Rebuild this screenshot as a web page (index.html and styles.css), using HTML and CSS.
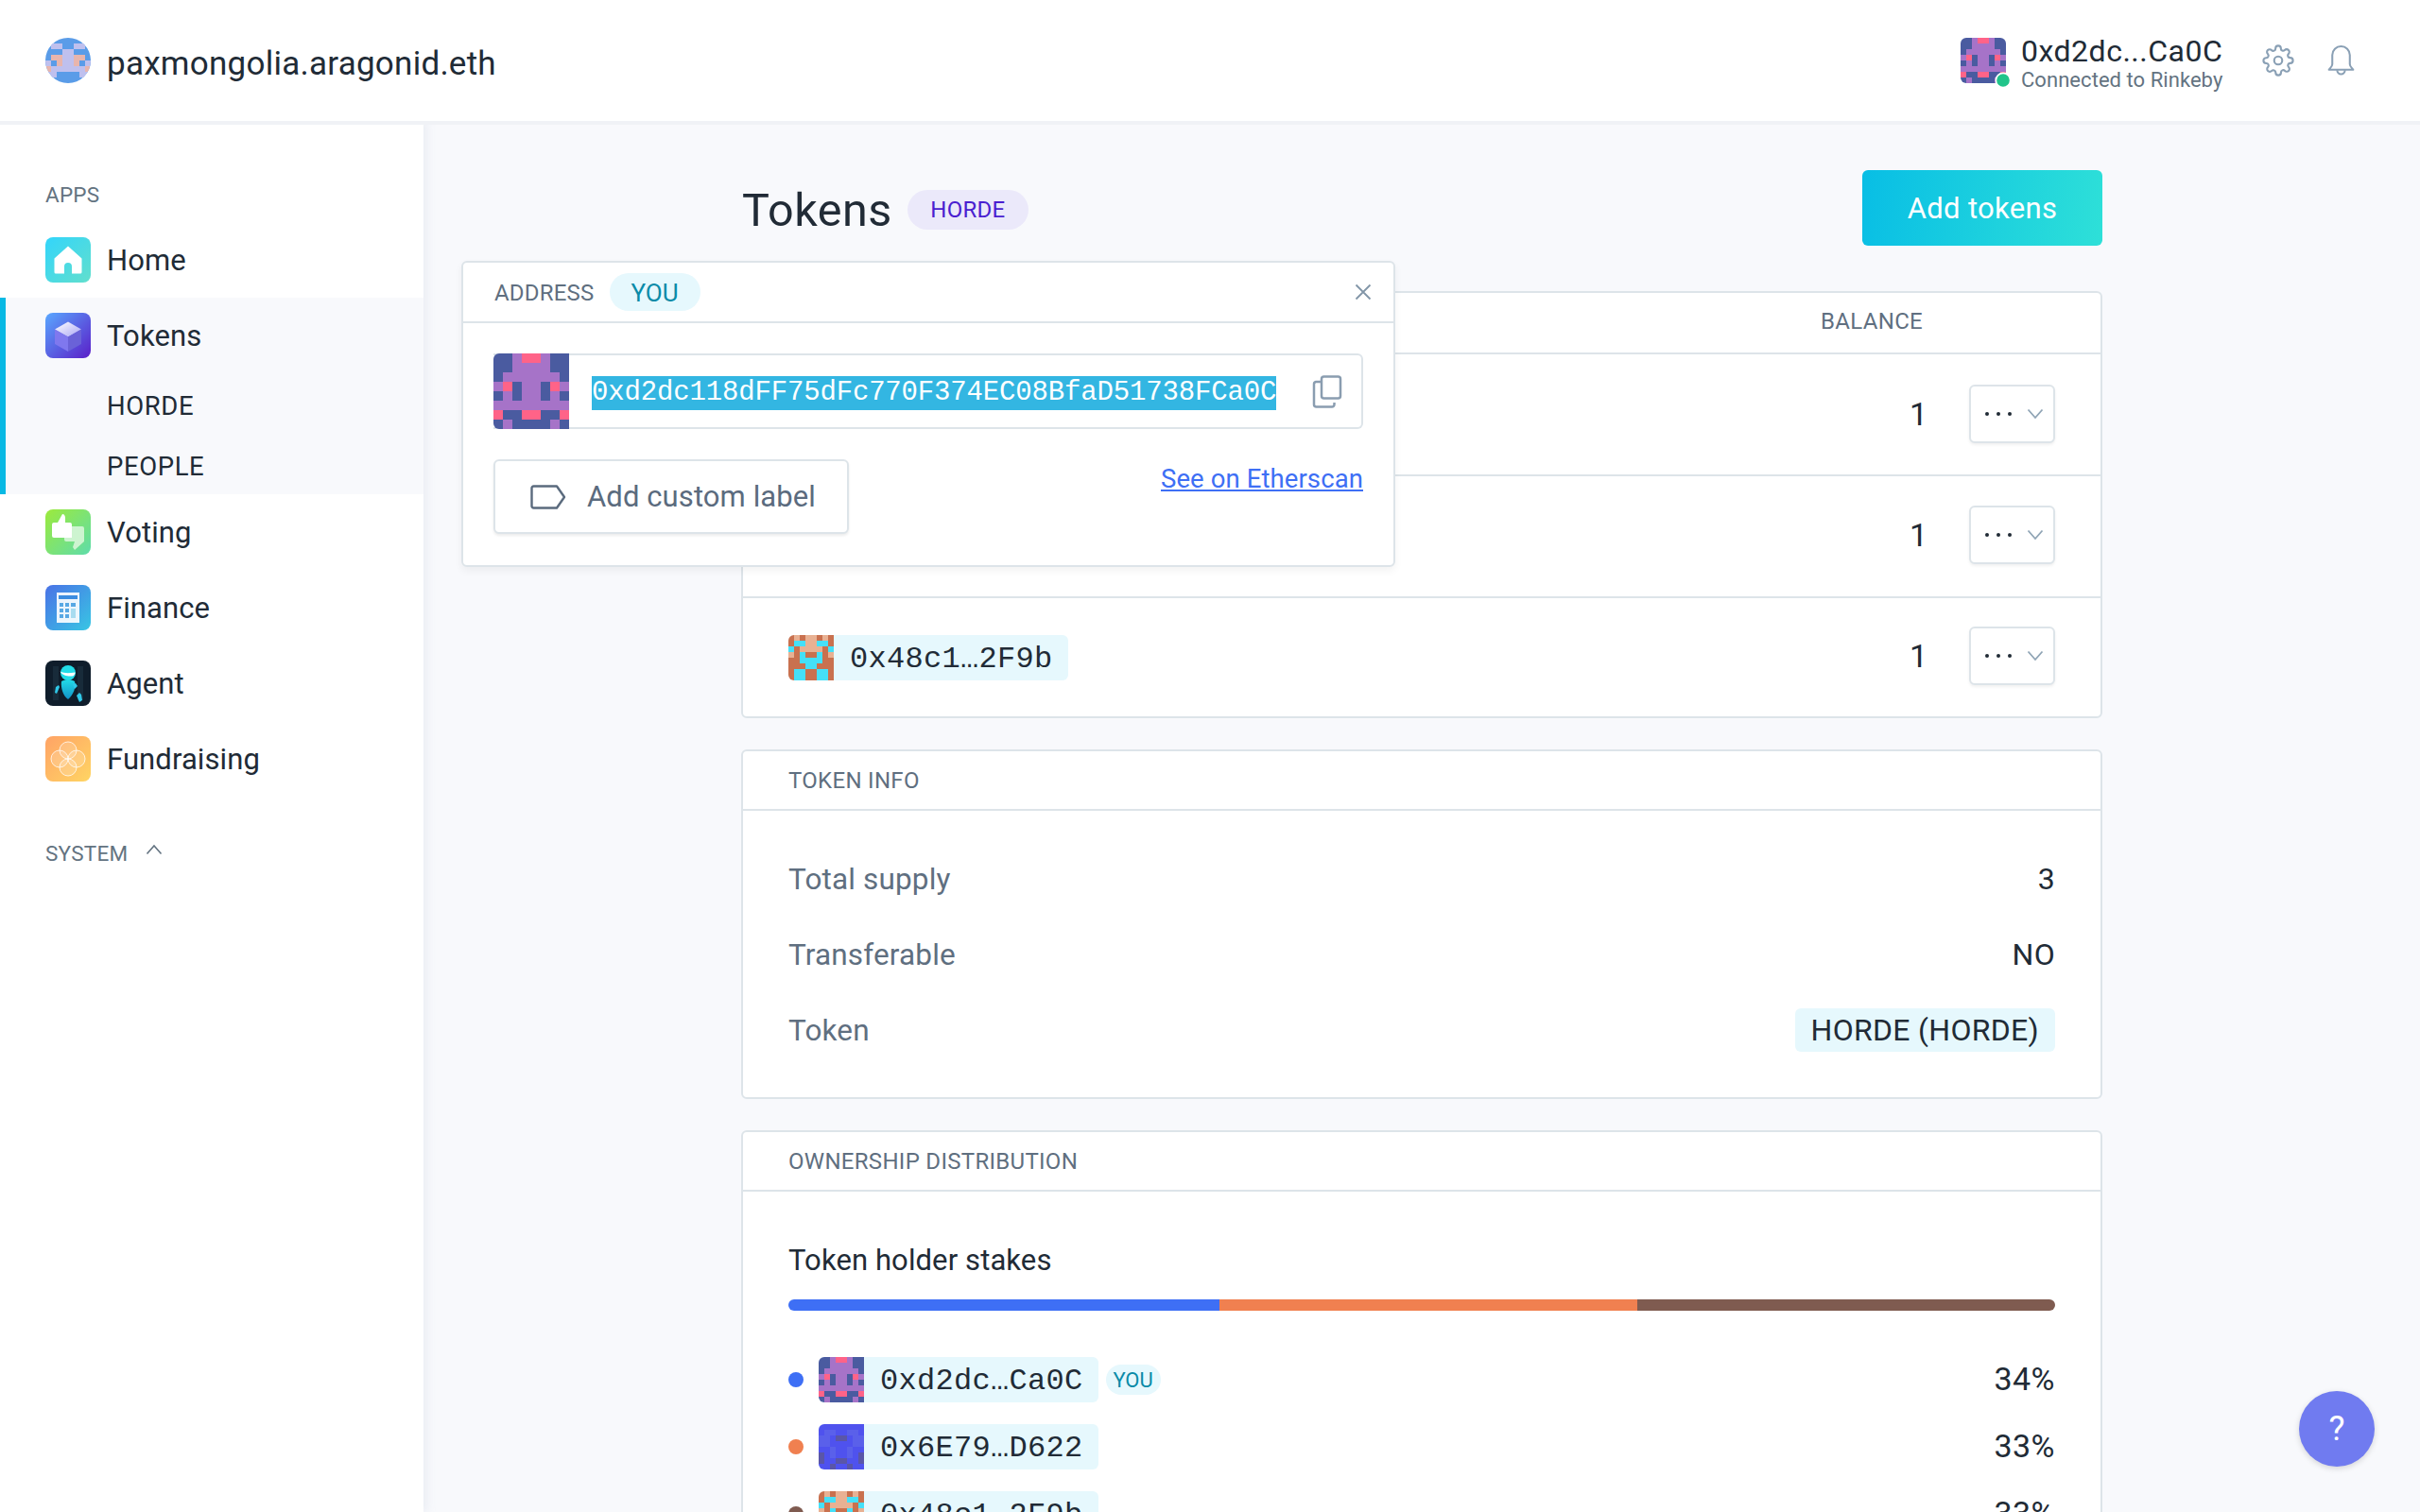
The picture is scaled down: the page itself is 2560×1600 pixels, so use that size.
FILE: index.html
```html
<!DOCTYPE html>
<html lang="en">
<head>
<meta charset="utf-8">
<title>Tokens</title>
<link rel="stylesheet" href="styles.css">
</head>
<body>
<svg class="defs" width="0" height="0" aria-hidden="true">
  <defs>
    <symbol id="av-you" viewBox="0 0 8 8" shape-rendering="crispEdges">
      <rect width="8" height="8" fill="#4a5ba0"/>
      <path fill="#a673c8" d="M2 0h1v1H2zM5 0h1v1H5zM2 1h4v1H2zM1 2h6v1H1zM0 3h1v1H0zM3 3h2v2H3zM7 3h1v1H7zM1 4h1v1H1zM6 4h1v1H6zM0 5h8v1H0zM1 7h1v1H1zM6 7h1v1H6z"/>
      <path fill="#ff6388" d="M3 0h2v1H3zM1 3h1v1H1zM6 3h1v1H6zM0 6h1v1H0zM3 6h2v1H3zM7 6h1v1H7z"/>
    </symbol>
    <symbol id="av-blue" viewBox="0 0 8 8" shape-rendering="crispEdges">
      <rect width="8" height="8" fill="#4f52ee"/>
      <path fill="#5a60ea" d="M1 1h2v1H1zM5 1h2v1H5zM0 2h2v2H0zM6 2h2v2H6zM2 4h1v2H2zM5 4h1v2H5z"/>
      <path fill="#5a56a8" d="M3 2h2v1H3zM0 5h1v2H0zM7 5h1v2H7zM3 6h2v1H3zM2 7h1v1H2zM5 7h1v1H5z"/>
    </symbol>
    <symbol id="av-orange" viewBox="0 0 8 8" shape-rendering="crispEdges">
      <rect width="8" height="8" fill="#c9714f"/>
      <path fill="#e8b193" d="M1 0h1v1H1zM3 0h2v1H3zM6 0h1v1H6zM3 1h2v1H3zM2 2h4v1H2zM0 3h1v1H0zM7 3h1v1H7z"/>
      <path fill="#45e0f8" d="M1 1h2v1H1zM5 1h2v1H5zM0 2h1v1H0zM7 2h1v1H7zM2 3h1v1H2zM5 3h1v1H5zM2 4h4v1H2zM3 5h2v1H3zM1 6h2v2H1zM5 6h2v2H5z"/>
    </symbol>
    <symbol id="dots" viewBox="0 0 30 6"><circle cx="3" cy="3" r="2" fill="#212b36"/><circle cx="15" cy="3" r="2" fill="#212b36"/><circle cx="27" cy="3" r="2" fill="#212b36"/></symbol>
    <symbol id="chev" viewBox="0 0 18 12"><path d="M1.500 1.500 9 10l7.500-8.500" fill="none" stroke="#8fa4b5" stroke-width="1.800"/></symbol>
    <linearGradient id="g-home" x1="0" y1="0" x2="1" y2="1"><stop offset="0" stop-color="#32d5fb"/><stop offset="1" stop-color="#62dfcd"/></linearGradient>
    <linearGradient id="g-tok" x1="0" y1="0" x2="1" y2="1"><stop offset="0" stop-color="#5aa8ff"/><stop offset="1" stop-color="#5a1ec8"/></linearGradient>
    <linearGradient id="g-cube" x1="0" y1="0" x2="1" y2="1"><stop offset="0" stop-color="#ffffff"/><stop offset="1" stop-color="#a9a6f4"/></linearGradient>
    <linearGradient id="g-vote" x1="0" y1="0" x2="1" y2="1"><stop offset="0" stop-color="#9cea3c"/><stop offset="1" stop-color="#5edcab"/></linearGradient>
    <linearGradient id="g-fin" x1="0" y1="0" x2="1" y2="1"><stop offset="0" stop-color="#4a72e6"/><stop offset="1" stop-color="#38c6e4"/></linearGradient>
    <linearGradient id="g-fund" x1="0" y1="0" x2="1" y2="1"><stop offset="0" stop-color="#ffa366"/><stop offset="1" stop-color="#ffd563"/></linearGradient>
    <linearGradient id="g-bot" x1="0" y1="0" x2="0" y2="1"><stop offset="0" stop-color="#22dbe8"/><stop offset="1" stop-color="#1292c8"/></linearGradient>
  </defs>
</svg>

<header class="topbar">
  <div class="org">
    <svg class="org-avatar" viewBox="0 0 8 8" shape-rendering="crispEdges">
      <rect width="8" height="8" fill="#5a9ce8"/>
      <path fill="#bfc0ee" d="M1 1h2v1H1zM5 1h2v1H5zM3 2h2v3H3zM0 4h1v1H0zM7 4h1v1H7zM1 5h6v1H1zM0 6h2v1H0zM6 6h2v1H6z"/>
      <path fill="#e8b5ad" d="M1 3h2v1H1zM5 3h2v1H5zM2 4h1v1H2zM5 4h1v1H5zM0 5h1v1H0zM7 5h1v1H7z"/>
    </svg>
    <span class="org-name">paxmongolia.aragonid.eth</span>
  </div>
  <div class="account">
    <div class="account-avatar">
      <svg class="av48 rounded"><use href="#av-you"/></svg>
      <span class="status"></span>
    </div>
    <div class="account-text">
      <span class="account-name">0xd2dc...Ca0C</span>
      <span class="account-net">Connected to Rinkeby</span>
    </div>
    <svg class="gear" viewBox="0 0 24 24" fill="none" stroke="#8aa0b5" stroke-width="1.500"><circle cx="12" cy="12" r="3"/><path d="M19.4 15a1.65 1.65 0 0 0 .33 1.82l.06.06a2 2 0 0 1 0 2.83 2 2 0 0 1-2.83 0l-.06-.06a1.65 1.65 0 0 0-1.82-.33 1.65 1.65 0 0 0-1 1.51V21a2 2 0 0 1-2 2 2 2 0 0 1-2-2v-.09A1.65 1.65 0 0 0 9 19.4a1.65 1.65 0 0 0-1.82.33l-.06.06a2 2 0 0 1-2.83 0 2 2 0 0 1 0-2.83l.06-.06a1.65 1.65 0 0 0 .33-1.82 1.65 1.65 0 0 0-1.51-1H3a2 2 0 0 1-2-2 2 2 0 0 1 2-2h.09A1.65 1.65 0 0 0 4.600 9a1.65 1.65 0 0 0-.33-1.82l-.06-.06a2 2 0 0 1 0-2.83 2 2 0 0 1 2.83 0l.06.06a1.65 1.65 0 0 0 1.82.33H9a1.65 1.65 0 0 0 1-1.51V3a2 2 0 0 1 2-2 2 2 0 0 1 2 2v.09a1.65 1.65 0 0 0 1 1.51 1.65 1.65 0 0 0 1.82-.33l.06-.06a2 2 0 0 1 2.83 0 2 2 0 0 1 0 2.83l-.06.06a1.65 1.65 0 0 0-.33 1.82V9a1.65 1.65 0 0 0 1.51 1H21a2 2 0 0 1 2 2 2 2 0 0 1-2 2h-.09a1.65 1.65 0 0 0-1.51 1z"/></svg>
    <svg class="bell" viewBox="0 0 28 33" fill="none" stroke="#8aa0b5" stroke-width="2"><path d="M1.500 26c0-1 3.500-2.500 3.500-5.500V11a9 9 0 0 1 18 0v9.500c0 3 3.500 4.500 3.500 5.500z" stroke-linejoin="round"/><path d="M10 26.500a4 4 0 0 0 8 0"/></svg>
  </div>
</header>

<div class="body-row">
  <nav class="sidebar">
    <div class="nav-label">APPS</div>
    <div class="nav-item">
      <svg class="app-icon" viewBox="0 0 48 48"><rect width="48" height="48" rx="8" fill="url(#g-home)"/><path fill="#fff" d="M24 9.500 9.500 22.500V37a1.500 1.500 0 0 0 1.500 1.500h9V31a4 4 0 0 1 8 0v7.500h9a1.500 1.500 0 0 0 1.500-1.500V22.500z"/></svg>
      <span>Home</span>
    </div>
    <div class="nav-group">
      <div class="nav-item">
        <svg class="app-icon" viewBox="0 0 48 48"><rect width="48" height="48" rx="8" fill="url(#g-tok)"/><path fill="url(#g-cube)" d="M24 9.500 38 17.500 24 25.500 10 17.500z"/><path fill="#7f78ee" d="M10 17.500 24 25.500V41L10 33z"/><path fill="#6a62d8" d="M38 17.500 24 25.500V41L38 33z"/></svg>
        <span>Tokens</span>
      </div>
      <div class="nav-sub">HORDE</div>
      <div class="nav-sub">PEOPLE</div>
    </div>
    <div class="nav-item">
      <svg class="app-icon" viewBox="0 0 48 48"><rect width="48" height="48" rx="8" fill="url(#g-vote)"/><path fill="#cdf4d0" d="M22 18h17a2 2 0 0 1 2 2v14L31 43l-2-3 2-6H22a2 2 0 0 1-2-2V20a2 2 0 0 1 2-2z"/><path fill="#fff" d="M9 14h4l5-9c2 0 3 2 3 4v5h5a2 2 0 0 1 2 2v14H9a2 2 0 0 1-2-2V16a2 2 0 0 1 2-2z"/></svg>
      <span>Voting</span>
    </div>
    <div class="nav-item">
      <svg class="app-icon" viewBox="0 0 48 48"><rect width="48" height="48" rx="8" fill="url(#g-fin)"/><rect x="12" y="8" width="24" height="32" fill="#fff" opacity=".9"/><rect x="14" y="11" width="20" height="4" fill="#3c8de0"/><path fill="#58a8e4" d="M15 19h4v4h-4zM21 19h4v4h-4zM27 19h5v4h-5zM15 25h4v4h-4zM21 25h4v4h-4zM15 31h4v4h-4zM21 31h4v4h-4z"/><rect x="27" y="25" width="5" height="10" fill="#a8dcf0"/></svg>
      <span>Finance</span>
    </div>
    <div class="nav-item">
      <svg class="app-icon" viewBox="0 0 48 48"><rect width="48" height="48" rx="8" fill="#0f1d2b"/><path fill="#182b3a" d="M8 6h6v36H8zM34 6h6v36h-6z"/><circle cx="24" cy="13" r="8" fill="#22dde8"/><path fill="#fff" d="M15.500 11.500c4 2 9 2 16 1 0 2-1 3.500-3 4-5 .5-10-.5-13-5z"/><path fill="url(#g-bot)" d="M17 22c4-2.500 10-2.500 14 0 1.500 6-1 14-7 19-5-3-8-12-7-19z"/><path fill="#2fc8e8" d="M11 28l3-2 1 2-3 7-2-1zM33 37l3-3 2 2 1 6-3 2zM29 25l3-1 2 3-3 3z"/></svg>
      <span>Agent</span>
    </div>
    <div class="nav-item">
      <svg class="app-icon" viewBox="0 0 48 48"><rect width="48" height="48" rx="8" fill="url(#g-fund)"/><g fill="#fff" fill-opacity=".18" stroke="#fff" stroke-opacity=".75" stroke-width="1"><circle cx="24" cy="15" r="9"/><circle cx="24" cy="33" r="9"/><circle cx="15" cy="24" r="9"/><circle cx="33" cy="24" r="9"/></g></svg>
      <span>Fundraising</span>
    </div>
    <div class="nav-label nav-system">SYSTEM
      <svg class="sys-chev" viewBox="0 0 18 12"><path d="M1.500 10.500 9 2l7.500 8.500" fill="none" stroke="#637381" stroke-width="1.600"/></svg>
    </div>
  </nav>

  <main class="main">
    <div class="content">
      <div class="title-row">
        <div class="title-left">
          <h1 class="title">Tokens</h1>
          <span class="badge-horde">HORDE</span>
        </div>
        <button class="primary">Add tokens</button>
      </div>

      <section class="panel">
        <div class="panel-head head-holders"><span class="head-balance">BALANCE</span></div>
        <div class="holder">
          <div class="holder-id"></div>
          <span class="balance">1</span>
          <span class="menu"><svg class="dots"><use href="#dots"/></svg><svg class="chev"><use href="#chev"/></svg></span>
        </div>
        <div class="holder">
          <div class="holder-id"></div>
          <span class="balance">1</span>
          <span class="menu"><svg class="dots"><use href="#dots"/></svg><svg class="chev"><use href="#chev"/></svg></span>
        </div>
        <div class="holder">
          <div class="holder-id"><span class="chip"><svg class="av48"><use href="#av-orange"/></svg><span class="chip-text">0x48c1…2F9b</span></span></div>
          <span class="balance">1</span>
          <span class="menu"><svg class="dots"><use href="#dots"/></svg><svg class="chev"><use href="#chev"/></svg></span>
        </div>
      </section>

      <section class="panel">
        <div class="panel-head">TOKEN INFO</div>
        <div class="info-body">
          <div class="info-row"><span class="info-key">Total supply</span><span class="info-val">3</span></div>
          <div class="info-row"><span class="info-key">Transferable</span><span class="info-val">NO</span></div>
          <div class="info-row"><span class="info-key">Token</span><span class="info-val token-chip">HORDE (HORDE)</span></div>
        </div>
      </section>

      <section class="panel panel-last">
        <div class="panel-head">OWNERSHIP DISTRIBUTION</div>
        <div class="dist-body">
          <div class="dist-title">Token holder stakes</div>
          <div class="bar">
            <span class="seg seg-a"></span><span class="seg seg-b"></span><span class="seg seg-c"></span>
          </div>
          <ul class="stakes">
            <li class="stake"><span class="dot dot-a"></span><span class="chip"><svg class="av48"><use href="#av-you"/></svg><span class="chip-text">0xd2dc…Ca0C</span></span><span class="you-small">YOU</span><span class="pct">34%</span></li>
            <li class="stake"><span class="dot dot-b"></span><span class="chip"><svg class="av48"><use href="#av-blue"/></svg><span class="chip-text">0x6E79…D622</span></span><span class="pct">33%</span></li>
            <li class="stake"><span class="dot dot-c"></span><span class="chip"><svg class="av48"><use href="#av-orange"/></svg><span class="chip-text">0x48c1…2F9b</span></span><span class="pct">33%</span></li>
          </ul>
        </div>
      </section>
    </div>
  </main>
</div>

<div class="popover">
  <div class="pop-head">
    <span class="pop-label">ADDRESS</span>
    <span class="you-big">YOU</span>
    <svg class="pop-close" viewBox="0 0 18 18"><path d="M1.500 1.500l15 15M16.500 1.500l-15 15" stroke="#8296a8" stroke-width="1.800" fill="none"/></svg>
  </div>
  <div class="pop-body">
    <div class="addr-box">
      <svg class="av80"><use href="#av-you"/></svg>
      <span class="addr-text"><span class="addr-sel">0xd2dc118dFF75dFc770F374EC08BfaD51738FCa0C</span></span>
      <svg class="copy" viewBox="0 0 32 35" fill="none" stroke="#8a9db0" stroke-width="2.500"><rect x="10" y="1.500" width="20" height="23" rx="2.500"/><path d="M10 7H4a2.500 2.500 0 0 0-2 2.500V31a2.500 2.500 0 0 0 2.500 2.500H21a2.500 2.500 0 0 0 2.500-2.500v-2"/></svg>
    </div>
    <div class="pop-actions">
      <button class="label-btn">
        <svg class="tag" viewBox="0 0 38 26" fill="none" stroke="#5b6b7e" stroke-width="2.400"><path d="M3.500 1.500H28l8 11.500-8 11.500H3.500a2 2 0 0 1-2-2v-19a2 2 0 0 1 2-2z" stroke-linejoin="round"/></svg>
        Add custom label
      </button>
      <a class="scan" href="#">See on Etherscan</a>
    </div>
  </div>
</div>

<button class="help">?</button>
</body>
</html>
```

FILE: styles.css
```css
* { box-sizing: border-box; }
html, body { margin: 0; padding: 0; height: 1600px; width: 2560px; overflow: hidden; }
body {
  font-family: Roboto, "Noto Sans", sans-serif;
  color: #212b36;
  background: #f8f9fc;
  display: flex;
  flex-direction: column;
  position: relative;
}
.defs { position: absolute; }
button { font-family: inherit; cursor: pointer; }

/* top bar */
.topbar {
  height: 128px;
  flex: none;
  background: #fff;
  display: flex;
  align-items: center;
  justify-content: space-between;
  padding: 0 69px 0 48px;
  box-shadow: 0 4px 0 #f0f2f6;
  position: relative;
  z-index: 2;
}
.org { display: flex; align-items: center; gap: 17px; }
.org-avatar { width: 48px; height: 48px; border-radius: 50%; }
.org-name { font-size: 35px; letter-spacing: .25px; padding-top: 6px; }
.account { display: flex; align-items: center; }
.account-avatar { position: relative; width: 48px; height: 48px; margin-right: 16px; }
.av48 { width: 48px; height: 48px; display: block; flex: none; }
.rounded { border-radius: 6px; }
.status {
  position: absolute; right: -6px; bottom: -6px;
  width: 16px; height: 16px; border-radius: 50%;
  background: #21c48a; border: 2px solid #fff; box-sizing: content-box;
  transform: translate(1px, 1px) scale(.85);
}
.account-text { display: flex; flex-direction: column; width: 213px; margin-top: 5px; }
.account-name { font-size: 32px; line-height: 36px; white-space: nowrap; letter-spacing: .5px; }
.account-net { font-size: 22px; line-height: 26px; color: #637381; white-space: nowrap; letter-spacing: .05px; }
.gear { width: 34px; height: 34px; margin-left: 42px; }
.bell { width: 29px; height: 34px; margin-left: 35px; }

/* sidebar */
.body-row { flex: 1; display: flex; min-height: 0; }
.sidebar {
  width: 448px; flex: none; background: #fff; padding-top: 62px;
  box-shadow: 4px 0 8px rgba(200, 208, 222, .25);
  position: relative; z-index: 1;
  font-size: 31px;
}
.nav-label { padding-left: 48px; font-size: 22.500px; line-height: 32px; color: #637381; margin-bottom: 13px; letter-spacing: .25px; }
.nav-item { height: 80px; display: flex; align-items: center; gap: 17px; padding-left: 48px; letter-spacing: .1px; }
.app-icon { width: 48px; height: 48px; flex: none; }
.nav-group { background: #f8f9fc; border-left: 6px solid #08b9e4; height: 208px; }
.nav-group .nav-item { padding-left: 42px; }
.nav-sub { height: 64px; display: flex; align-items: center; padding: 4px 0 0 107px; font-size: 27.500px; letter-spacing: .6px; }
.nav-system { margin-top: 44px; margin-bottom: 0; display: flex; align-items: center; gap: 19px; }
.sys-chev { width: 18px; height: 12px; margin-bottom: 8px; }

/* main */
.main { flex: 1; min-width: 0; overflow: hidden; padding-top: 52px; }
.content { width: 1440px; margin: 0 auto; }
.title-row { display: flex; align-items: center; justify-content: space-between; height: 80px; margin-bottom: 48px; }
.title-left { display: flex; align-items: center; gap: 16px; padding: 3px 0 0 1px; }
.title { font-size: 48.500px; font-weight: 400; margin: 0; letter-spacing: .5px; padding-top: 2px; }
.badge-horde {
  height: 42px; width: 128px; border-radius: 21px; background: #ebe9fa; color: #4a1fd0;
  font-size: 24px; display: flex; align-items: center; justify-content: center; letter-spacing: .3px;
}
.primary {
  width: 254px; height: 80px; border: 0; border-radius: 6px; color: #fff; font-size: 31px;
  background: linear-gradient(100deg, #08bee5, #2ee0d8); letter-spacing: .3px;
}
.panel { background: #fff; border: 2px solid #dde4e9; border-radius: 6px; margin-bottom: 33px; }
.panel-head {
  height: 63px; padding: 0 48px; display: flex; align-items: center;
  font-size: 24px; color: #5f6f80; border-bottom: 2px solid #dde4e9; letter-spacing: .3px;
}
.head-holders { height: 65px; justify-content: flex-end; padding-right: 188px; padding-bottom: 3px; }
.holder { display: flex; align-items: center; height: 127px; padding: 0 48px 2px; }
.holder + .holder { border-top: 2px solid #dde4e9; height: 129px; padding-bottom: 4px; }
.holder:last-child { height: 127px; }
.holder-id { flex: 1; display: flex; padding-top: 5px; }
.balance { font-size: 34px; margin-right: 44px; }
.menu {
  width: 91px; height: 62px; border: 2px solid #dde4e9; border-radius: 6px; background: #fff;
  box-shadow: 0 2px 3px rgba(0, 0, 0, .06);
  display: flex; align-items: center; gap: 15px; padding-left: 14px;
}
.dots { width: 30px; height: 6px; }
.chev { width: 18px; height: 12px; }
.chip { display: inline-flex; align-items: center; height: 48px; background: #e6f8fd; border-radius: 6px; overflow: hidden; }
.chip-text {
  font-family: "Liberation Mono", monospace; font-size: 32px; letter-spacing: .3px;
  padding: 2px 16px 0 17px; color: #212b36; white-space: nowrap;
}
.info-body { padding: 32px 48px 0; height: 303px; }
.info-row { height: 80px; display: flex; align-items: center; justify-content: space-between; font-size: 32px; }
.info-key { color: #5f6f80; font-size: 31.500px; letter-spacing: .15px; }
.info-val { letter-spacing: .3px; }
.token-chip { background: #e6f8fd; border-radius: 6px; height: 46px; padding: 0 17px; display: flex; align-items: center; }
.panel-last { margin-bottom: 0; }
.dist-body { padding: 53px 48px 0; }
.dist-title { font-size: 31px; line-height: 40px; letter-spacing: .1px; }
.bar { display: flex; height: 12px; margin-top: 21px; border-radius: 6px; overflow: hidden; }
.seg-a { width: 34%; background: #3e6ff5; }
.seg-b { width: 33%; background: #f08050; }
.seg-c { width: 33%; background: #7f5b50; }
.stakes { list-style: none; margin: 49px 0 0; padding: 0; }
.stake { height: 71px; display: flex; align-items: flex-start; font-size: 32px; }
.dot { width: 16px; height: 16px; border-radius: 50%; margin: 16px 16px 0 0; flex: none; }
.dot-a { background: #3e6ff5; }
.dot-b { background: #f08050; }
.dot-c { background: #7f5b50; }
.you-small {
  margin: 8px 0 0 8px; width: 58px; height: 32px; border-radius: 16px; background: #e6f8fd; color: #0a8ba8;
  font-size: 22px; display: flex; align-items: center; justify-content: center;
}
.pct { margin-left: auto; font-size: 34px; line-height: 46px; letter-spacing: .5px; }

/* address popover (overlay) */
.popover {
  position: absolute; left: 488px; top: 276px; width: 988px; height: 324px;
  background: #fff; border: 2px solid #dde4e9; border-radius: 6px;
  box-shadow: 0 4px 8px rgba(0, 0, 0, .05);
  z-index: 5;
}
.pop-head { height: 64px; display: flex; align-items: center; padding: 0 23px 0 33px; border-bottom: 2px solid #dde4e9; }
.pop-label { font-size: 24px; color: #5f6f80; letter-spacing: .2px; padding-top: 2px; }
.you-big {
  width: 96px; height: 40px; border-radius: 20px; background: #e6f8fd; color: #0a8ba8;
  font-size: 26px; display: flex; align-items: center; justify-content: center; margin-left: 16px; padding-top: 1px;
}
.pop-close { width: 18px; height: 18px; margin-left: auto; }
.pop-body { padding: 32px 32px 0; }
.addr-box {
  height: 80px; border: 2px solid #dde4e9; border-left: 0; border-radius: 0 6px 6px 0;
  display: flex; align-items: center; background: #fff;
}
.av80 { width: 80px; height: 80px; border-radius: 6px 0 0 6px; flex: none; margin: -2px 0; }
.addr-text { font-family: "Liberation Mono", monospace; font-size: 29px; letter-spacing: -.16px; margin-left: 24px; flex: 1; white-space: nowrap; line-height: 36px; padding-top: 4px; }
.addr-sel { background: #33b6e2; color: #fff; display: inline-block; line-height: 36px; }
.copy { width: 32px; height: 35px; margin-right: 20px; }
.pop-actions { display: flex; justify-content: space-between; align-items: flex-start; margin-top: 32px; }
.label-btn {
  width: 376px; height: 79px; background: #fff; border: 2px solid #dde4e9; border-radius: 6px;
  box-shadow: 0 2px 3px rgba(0, 0, 0, .08);
  display: flex; align-items: center; gap: 22px; padding: 0 0 0 37px;
  font-size: 31px; color: #5b6b7e; letter-spacing: .1px; white-space: nowrap;
}
.tag { width: 38px; height: 26px; flex: none; }
.scan { color: #3e6ff5; font-size: 27.500px; line-height: 42px; text-decoration: underline; letter-spacing: .1px; }

/* help */
.help {
  position: absolute; left: 2432px; top: 1472px; width: 80px; height: 80px; border: 0; border-radius: 50%;
  background: #707bf0; color: #fff; font-size: 36px; box-shadow: 0 2px 6px rgba(0, 0, 0, .15);
  z-index: 6;
}
```
